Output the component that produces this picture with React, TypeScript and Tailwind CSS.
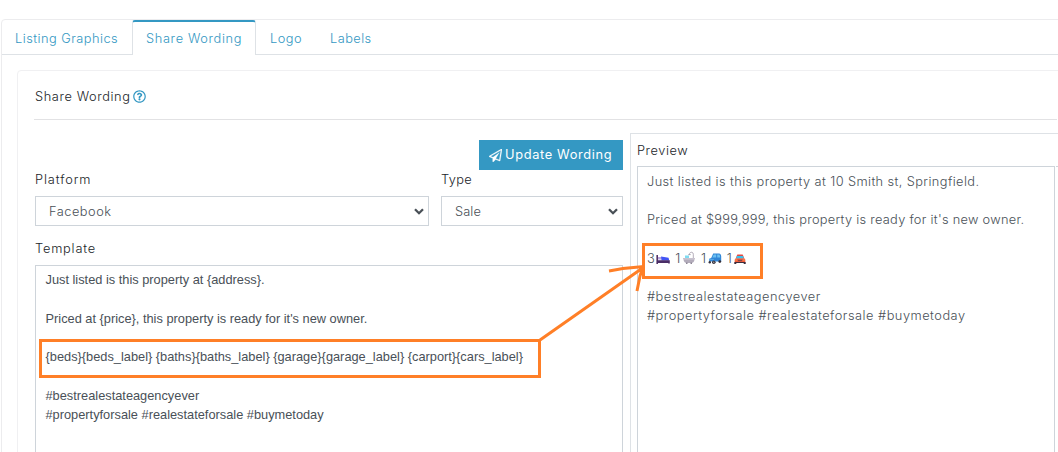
import React from 'react'
import { FaRegQuestionCircle } from 'react-icons/fa'

const TABS = [
  { label: 'Listing Graphics', className: 'w-[130px] pl-[13px] tracking-[0.47px]' },
  { label: 'Share Wording', className: 'w-[124px] pl-[13px] tracking-[0.65px]', active: true },
  { label: 'Logo', className: 'w-[60px] pl-[14px] tracking-[0.5px]' },
  { label: 'Labels', className: 'pl-[14px] tracking-[0.45px]' },
]

const TEMPLATE = `Just listed is this property at {address}.

Priced at {price}, this property is ready for it's new owner.

{beds}{beds_label} {baths}{baths_label} {garage}{garage_label} {carport}{cars_label}

#bestrealestateagencyever
#propertyforsale #realestateforsale #buymetoday`

function PlaneIcon() {
  return (
    <svg className="mr-[3px] shrink-0" width="13" height="13" viewBox="0 0 1792 1792" fill="currentColor" stroke="currentColor" strokeWidth="40">
      <path d="M1764 11q33 24 27 64l-256 1536q-5 29-32 45-14 8-31 8-11 0-24-5l-527-215-298 327q-18 21-47 21-14 0-23-4-19-7-30-23.5t-11-36.5v-452l-472-193q-37-14-40-55-3-39 32-59l1664-960q35-21 68 2zm-342 1499l221-1323-1434 827 336 137 863-639-478 797z" />
    </svg>
  )
}

function Chevron() {
  return (
    <svg className="ml-auto" width="10" height="7" viewBox="0 0 10 7" fill="none" stroke="#495057" strokeWidth="2.3">
      <path d="M1 1.2 5 5.2 9 1.2" />
    </svg>
  )
}

function SelectBox({ value, className }: { value: string; className: string }) {
  return (
    <button className={`flex h-[30px] items-center border border-[#ced4da] bg-white pl-[13px] pr-[4px] text-[#495057] ${className}`}>
      <span className="pt-px">{value}</span>
      <Chevron />
    </button>
  )
}

function BedIcon() {
  return (
    <svg width="14" height="14" viewBox="0 0 14 14">
      <path d="M0.4 4h1.6v9H.4z" fill="#533566" />
      <path d="M2 6h3.6l1 2.6H2z" fill="#b9a5e0" />
      <path d="M5 5.6 12.6 6.8 13.2 9.5H5.6z" fill="#4254f5" />
      <path d="M1 9.3h12.8v3.2h-1.6v-.6H1z" fill="#4a2d66" />
    </svg>
  )
}

function BathIcon() {
  return (
    <svg width="14" height="14" viewBox="0 0 14 14">
      <path d="M3 7.4V4.6h4v2.8z" fill="#7edcf2" />
      <path d="M7.4 3.6C7.4.5 11.3.5 11.3 3.2V7" fill="none" stroke="#b4adba" strokeWidth="1" />
      <path d="M6.4 3.6h2.2" stroke="#a39aab" strokeWidth="1" />
      <path d="M1 7h12v1.3H1z" fill="#c8c2cf" />
      <path d="M1.5 8.2h11c0 2.2-1.5 3.8-3.1 3.8H4.6c-1.6 0-3.1-1.6-3.1-3.8z" fill="#b3acbb" />
      <path d="M4 11.6h1.5V13H4zM8.5 11.6H10V13H8.5z" fill="#8c8594" />
    </svg>
  )
}

function CarIcon() {
  return (
    <svg width="14" height="14" viewBox="0 0 14 14">
      <path d="M5.2 2.6h6c1.2 0 2 1.2 2 3v5H1.2V7.8l2-.8z" fill="#3186d6" />
      <path d="M5.8 3.6h2.4v3H4.2zM9.2 3.6h1.6c.9 0 1.3 1 1.3 3H9.2z" fill="#6bc0f2" />
      <path d="M1.2 7.9h4.6v1H1.2z" fill="#5aaeea" />
      <circle cx="5.8" cy="11.3" r="1.8" fill="#36313d" />
      <circle cx="11.8" cy="10.6" r="1.4" fill="#36313d" />
      <circle cx="1.8" cy="11.2" r="1.2" fill="#36313d" />
      <circle cx="5.8" cy="11.3" r=".7" fill="#aaa" />
    </svg>
  )
}

function FrontCarIcon() {
  return (
    <svg width="14" height="14" viewBox="0 0 14 14">
      <path d="M4.3 3.6h5.4l1.6 3.8H2.7z" fill="#e8473e" />
      <path d="M4 5h6l.9 2.6H3.1z" fill="#38c3ee" />
      <path d="M2.4 7.4h9.2l.7 1.4v2.4H1.7V8.8z" fill="#ef5b3c" />
      <path d="M5 8.8h4v1.4H5z" fill="#7d4a4c" />
      <path d="M2.2 8.4h1.7v1.1H2.2zM10.1 8.4h1.7v1.1h-1.7z" fill="#ffa04b" />
      <path d="M1.3 11h11.4v2h-2v-1H3.3v1h-2z" fill="#3c2c3c" />
    </svg>
  )
}

const AMENITIES = [
  { count: 3, Icon: BedIcon },
  { count: 1, Icon: BathIcon },
  { count: 1, Icon: CarIcon },
  { count: 1, Icon: FrontCarIcon },
]

function Preview() {
  return (
    <section className="h-[330px] w-[440px] shrink-0 border-l border-t border-[#dee2e6] pl-[6px]">
      <h3 className="h-[32px] pt-[7px] leading-[20px] tracking-[0.55px] text-[#212529]">Preview</h3>
      <div className="flex gap-px">
        <div className="h-[300px] w-[418px] shrink-0 whitespace-nowrap border border-[#ced4da] pl-[9px] pt-[5px] leading-[19.2px] text-[#495057]">
          <p className="tracking-[0.4px]">Just listed is this property at 10 Smith st, Springfield.</p>
          <p className="mt-[19.2px] tracking-[0.29px]">Priced at $999,999, this property is ready for it's new owner.</p>
          <div className="mt-[19.2px] flex h-[19px] items-center gap-[5px]">
            {AMENITIES.map(({ count, Icon }, i) => (
              <span key={i} className="flex items-center gap-[1.6px]">
                {count}
                <Icon />
              </span>
            ))}
          </div>
          <p className="mt-[19.2px] tracking-[0.5px]">#bestrealestateagencyever</p>
          <p className="tracking-[0.5px]">#propertyforsale #realestateforsale #buymetoday</p>
        </div>
        <div className="h-[300px] w-4 border-t border-[#ced4da]" />
      </div>
    </section>
  )
}

function Annotations() {
  return (
    <>
      <div className="absolute left-[39px] top-[339px] h-[39px] w-[502px] border-[3px] border-[#ff7f27]" />
      <div className="absolute left-[642px] top-[243px] h-[36px] w-[121px] border-[3px] border-[#ff7f27]" />
      <svg className="absolute left-[530px] top-[250px]" width="120" height="100" fill="none" stroke="#ff7f27" strokeWidth="3">
        <path d="M10 90 114 17M79 21 93 18.5 114 16.5M107 41 110 26 113 17" />
      </svg>
    </>
  )
}

export default function App() {
  return (
    <main className="relative h-[452px] w-[1058px] overflow-hidden bg-white pl-px pt-[19px] font-['Inter',sans-serif] text-[12.8px] font-light">
      <div className="h-[450px] w-[1080px] rounded-tl-[4px] border border-[#ececee]">
        <nav className="flex h-[35px] border-b border-[#dee2e6] text-[#3498c3]">
          {TABS.map(tab => (
            <a
              key={tab.label}
              className={`h-[35px] shrink-0 whitespace-nowrap leading-[20px] ${tab.className} ${
                tab.active ? 'rounded-t-[3px] border-x border-t-2 border-x-[#dee2e6] border-t-[#3498c3] bg-white pt-[7px]' : 'pt-[9px]'
              }`}
            >
              {tab.label}
            </a>
          ))}
        </nav>

        <div className="ml-[15px] mt-[15px] h-[400px] rounded-tl-[4px] border border-[#f0f0f2] pl-[16px]">
          <header className="flex h-[49px] w-[1023px] items-center border-b border-[#e2e2e4] pt-[3px]">
            <h2 className="pl-px tracking-[0.6px] text-[#212529]">Share Wording</h2>
            <FaRegQuestionCircle className="ml-[3px] size-[13px] text-[#3498c3]" />
          </header>

          <div className="flex pt-[13px]">
            <section className="mr-[7px] w-[589px] shrink-0 pl-px text-[#212529]">
              <button className="ml-auto mt-[7px] flex h-[30px] w-[144px] items-center bg-[#3498c3] pl-[10px] text-white">
                <PlaneIcon />
                <span className="whitespace-nowrap font-normal tracking-[0.65px]">Update Wording</span>
              </button>
              <div className="flex gap-[12px]">
                <div>
                  <label className="block h-[26px] leading-[20px] tracking-[0.9px]">Platform</label>
                  <SelectBox value="Facebook" className="w-[394px] tracking-[0.5px]" />
                </div>
                <div>
                  <label className="block h-[26px] leading-[20px] tracking-[0.4px]">Type</label>
                  <SelectBox value="Sale" className="w-[182px] tracking-[0.1px]" />
                </div>
              </div>
              <label className="mt-[13px] block h-[26px] leading-[20px] tracking-[0.8px]">Template</label>
              <div className="h-[220px] whitespace-pre border border-[#ced4da] pl-[9.5px] pt-[4.4px] font-['Liberation_Sans',sans-serif] font-normal leading-[19.2px] text-[#495057]">
                {TEMPLATE}
              </div>
            </section>
            <Preview />
          </div>
        </div>
      </div>
      <Annotations />
    </main>
  )
}
